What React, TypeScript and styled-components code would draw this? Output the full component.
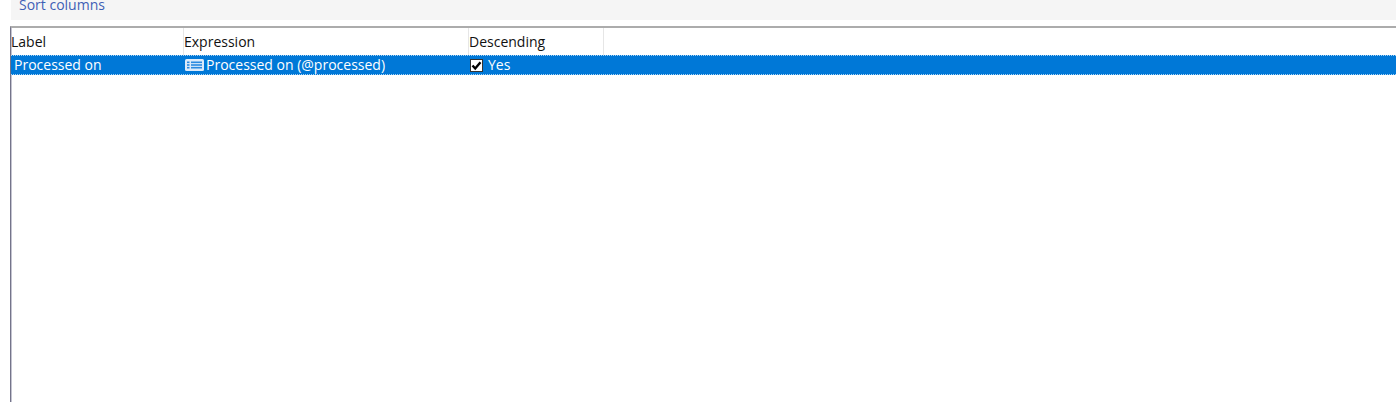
import React from "react";
import styled, { createGlobalStyle } from "styled-components";

const Global = createGlobalStyle`
  html, body { margin: 0; padding: 0; background: #fff; overflow: hidden; }
  body { font-family: "Open Sans", "Noto Sans", sans-serif; font-size: 14px; }
`;
const Page = styled.div`
  width: 1396px; height: 402px; display: flex; flex-direction: column;
  padding-left: 10px; box-sizing: border-box; overflow: hidden;
`;
const TitleBar = styled.div`
  height: 20px; background: #f5f5f5; margin-left: 1px; padding-left: 8px;
  display: flex; align-items: flex-start; flex: none; overflow: hidden;
`;
const Title = styled.span`
  color: #3f5fb5; font-size: 14px; line-height: 18px; margin-top: -4px;
`;
const Table = styled.div`
  margin-top: 6px; flex: 1; border-top: 2px solid #acacac; border-left: 1px solid #74748a;
  box-shadow: inset 1px 0 0 #c4c4d0;
  display: flex; flex-direction: column; min-height: 0;
`;
const Header = styled.div`
  display: flex; height: 27px; flex: none; color: #111;
`;
const HeadCell = styled.div<{ $w: number }>`
  width: ${p => p.$w}px; box-sizing: border-box; border-right: 1px solid #e6e6e6;
  padding: 5px 0 0 0; line-height: 18px; flex: none;
`;
const Row = styled.div`
  display: flex; height: 20px; background: #0078d7; color: #fff; flex: none;
  border-top: 1px dotted #a8d4f5; border-bottom: 1px dotted #a8d4f5; box-sizing: border-box;
  line-height: 18px;
`;
const Cell = styled.div<{ $w: number; $pl: number; $gap: number }>`
  width: ${p => p.$w}px; box-sizing: border-box; padding-left: ${p => p.$pl}px; flex: none;
  display: flex; align-items: center; gap: ${p => p.$gap}px; white-space: nowrap;
`;
const Icon = styled.svg`
  width: 19px; height: 12px; flex: none; display: block;
`;
const Check = styled.svg`
  width: 13px; height: 13px; flex: none; display: block;
`;

export default function App() {
  return (
    <Page>
      <Global />
      <TitleBar><Title>Sort columns</Title></TitleBar>
      <Table>
        <Header>
          <HeadCell $w={173}>Label</HeadCell>
          <HeadCell $w={285}>Expression</HeadCell>
          <HeadCell $w={135}>Descending</HeadCell>
        </Header>
        <Row>
          <Cell $w={173} $pl={3} $gap={0}>Processed on</Cell>
          <Cell $w={285} $pl={1} $gap={2}>
            <Icon viewBox="0 0 19 12">
              <rect width="19" height="12" rx="1.5" fill="#dbeafa" />
              <rect x="2" y="2.5" width="2.5" height="1.6" fill="#2a8ae0" />
              <rect x="2" y="5.2" width="2.5" height="1.6" fill="#2a8ae0" />
              <rect x="2" y="7.9" width="2.5" height="1.6" fill="#2a8ae0" />
              <rect x="6" y="2.5" width="11" height="1.6" fill="#2a8ae0" />
              <rect x="6" y="5.2" width="11" height="1.6" fill="#2a8ae0" />
              <rect x="6" y="7.9" width="11" height="1.6" fill="#2a8ae0" />
            </Icon>
            Processed on (@processed)
          </Cell>
          <Cell $w={135} $pl={1} $gap={5}>
            <Check viewBox="0 0 13 13">
              <rect x="0.5" y="0.5" width="12" height="12" fill="#fff" stroke="#333" />
              <path d="M2.5 6.5 L5.2 9.5 L10.5 3.2" fill="none" stroke="#000" strokeWidth="2.4" />
            </Check>
            Yes
          </Cell>
        </Row>
      </Table>
    </Page>
  );
}
